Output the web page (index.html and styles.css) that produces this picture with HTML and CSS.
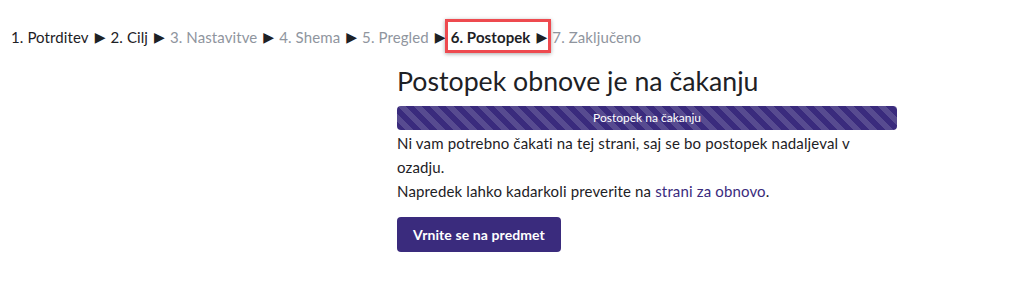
FILE: index.html
```html
<!DOCTYPE html>
<html lang="sl">
<head>
<meta charset="utf-8">
<title>Postopek obnove</title>
<link rel="stylesheet" href="styles.css">
</head>
<body>
<nav class="steps">
  <span class="step done">1. Potrditev</span><span class="sep">&#9654;</span>
  <span class="step done">2. Cilj</span><span class="sep">&#9654;</span>
  <span class="step todo">3. Nastavitve</span><span class="sep">&#9654;</span>
  <span class="step todo">4. Shema</span><span class="sep">&#9654;</span>
  <span class="step todo">5. Pregled</span><span class="sep">&#9654;</span>
  <span class="current-wrap"><span class="step current">6. Postopek</span><span class="sep">&#9654;</span><span class="highlight"></span></span>
  <span class="step todo">7. Zaključeno</span>
</nav>
<main class="content">
  <h2 class="title">Postopek obnove je na čakanju</h2>
  <div class="progress"><div class="progress-bar">Postopek na čakanju</div></div>
  <p class="info">Ni vam potrebno čakati na tej strani, saj se bo postopek nadaljeval v ozadju.<br>Napredek lahko kadarkoli preverite na <a href="#" class="link">strani za obnovo</a>.</p>
  <div class="actions"><button class="btn">Vrnite se na predmet</button></div>
</main>
</body>
</html>
```
FILE: styles.css
```css
* { box-sizing: border-box; }
html, body { margin: 0; padding: 0; background: #fff; }
body {
  font-family: "Lato", "Noto Sans", sans-serif;
  color: #1d2125;
  font-size: 15px;
}
.steps {
  padding: 27px 0 0 11px;
  height: 58px;
  font-size: 15px;
  line-height: 20px;
  white-space: nowrap;
  display: flex;
  align-items: flex-start;
  letter-spacing: 0.1px;
}
.step.done { color: #1d2125; }
.step.todo { color: #8f959e; }
.step.current { color: #1d2125; font-weight: 700; }
.sep {
  color: #1d2125;
  font-family: "DejaVu Sans", sans-serif;
  font-size: 14px;
  line-height: 20px;
  margin: 0 5px 0 6px;
}
.current-wrap { position: relative; display: inline-flex; align-items: flex-start; }
.highlight {
  position: absolute;
  left: -6px; right: 1px; top: -8px; bottom: -6px;
  border: 3px solid #ee4a4f;
  box-shadow: 0 1px 4px rgba(0,0,0,0.35);
  pointer-events: none;
}
.content {
  margin-left: 397px;
  width: 500px;
}
.title {
  margin: 0;
  font-weight: 400;
  font-size: 26.7px;
  line-height: 40px;
  padding-top: 3px;
  color: #1d2125;
}
.progress {
  margin-top: 5px;
  height: 24px;
  border-radius: 4px;
  overflow: hidden;
  background: #3a2b7d;
}
.progress-bar {
  height: 100%;
  background-color: #3a2b7d;
  background-image: linear-gradient(45deg, rgba(255,255,255,.15) 25%, transparent 25%, transparent 50%, rgba(255,255,255,.15) 50%, rgba(255,255,255,.15) 75%, transparent 75%, transparent);
  background-size: 16px 16px;
  color: #fff;
  font-size: 12px;
  line-height: 24px;
  text-align: center;
}
.info {
  margin: 1px 0 0;
  width: 480px;
  line-height: 24px;
  letter-spacing: 0.15px;
}
.link { color: #3a2b7d; text-decoration: none; }
.actions { margin-top: 14px; }
.btn {
  font-family: inherit;
  font-size: 14px;
  font-weight: 700;
  letter-spacing: 0.1px;
  color: #fff;
  background: #3a2b7d;
  border: 0;
  border-radius: 4px;
  height: 35px;
  width: 164px;
  padding: 0;
}
```
